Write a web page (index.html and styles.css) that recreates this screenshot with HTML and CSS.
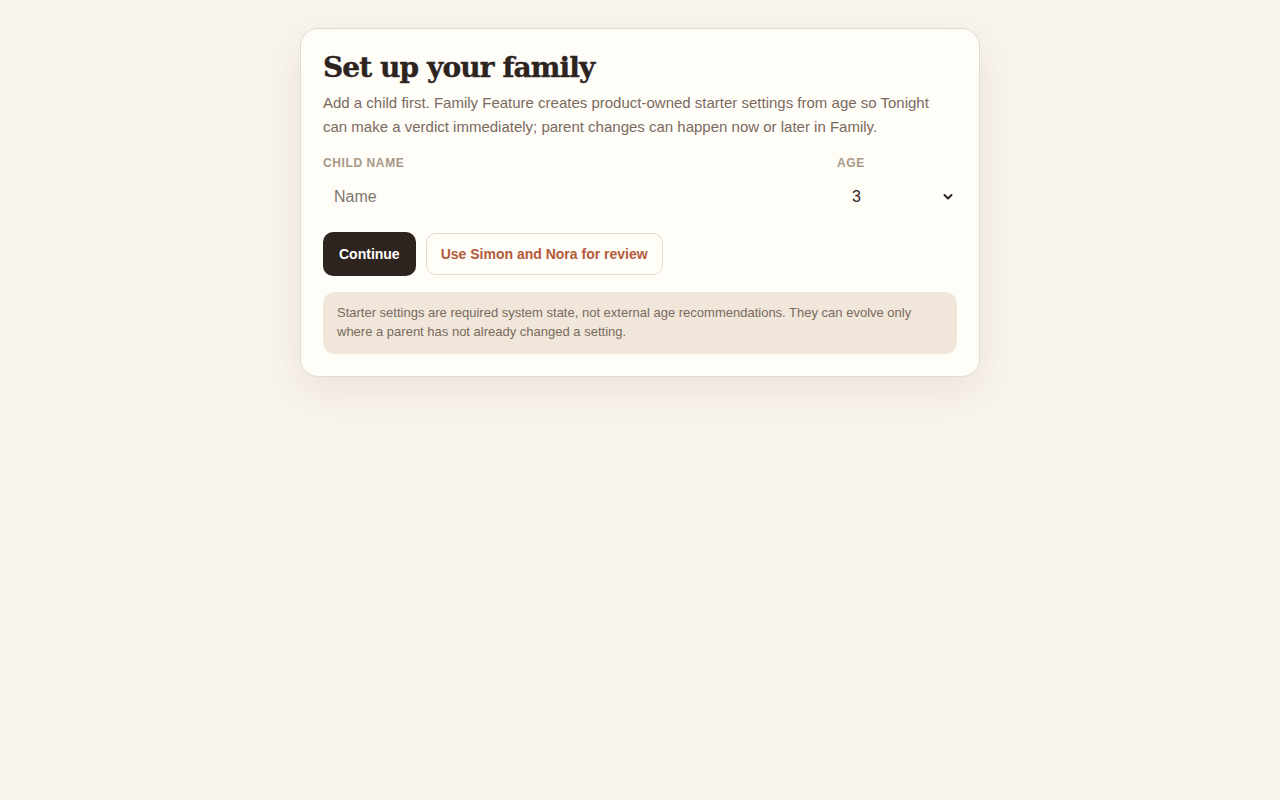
FILE: index.html
```html
<!DOCTYPE html>
<html lang="en">
<head>
<meta charset="utf-8">
<title>Set up your family</title>
<link rel="stylesheet" href="styles.css">
</head>
<body>
<main class="page">
  <section class="card">
    <h1 class="title">Set up your family</h1>
    <p class="lead">Add a child first. Family Feature creates product-owned starter settings from age so Tonight can make a verdict immediately; parent changes can happen now or later in Family.</p>
    <div class="fields">
      <label class="field">
        <span class="label">Child name</span>
        <input class="input" type="text" placeholder="Name">
      </label>
      <label class="field">
        <span class="label">Age</span>
        <span class="select-wrap">
          <span class="select-value">3</span>
          <svg class="chev" width="10" height="8" viewBox="0 0 10 8"><path d="M1.5 2 L5 5.5 L8.5 2" fill="none" stroke="#2e241f" stroke-width="2" stroke-linecap="round" stroke-linejoin="round"/></svg>
        </span>
      </label>
    </div>
    <div class="actions">
      <button class="btn btn-primary">Continue</button>
      <button class="btn btn-secondary">Use Simon and Nora for review</button>
    </div>
    <div class="note">Starter settings are required system state, not external age recommendations. They can evolve only where a parent has not already changed a setting.</div>
  </section>
</main>
</body>
</html>
```
FILE: styles.css
```css
html, body {
  margin: 0;
  padding: 0;
  background: #f9f4ee;
  font-family: "Liberation Sans", Arial, sans-serif;
}
.page {
  display: flex;
  justify-content: center;
  align-items: flex-start;
  padding: 28px 0 60px;
  min-height: 100vh;
  box-sizing: border-box;
}
.card {
  box-sizing: border-box;
  width: 680px;
  background: #fffdf8;
  border: 1px solid #e4dbd0;
  border-radius: 18px;
  padding: 20px 22px 22px;
  box-shadow: 0 14px 40px rgba(120, 80, 50, 0.10);
}
.title {
  margin: 0;
  font-family: "DejaVu Serif", "Liberation Serif", serif;
  font-weight: 700;
  font-size: 28px;
  letter-spacing: -0.9px;
  line-height: 38px;
  color: #2e241f;
  -webkit-text-stroke: 0.4px #2e241f;
}
.lead {
  margin: 4px 0 0;
  font-size: 15px;
  line-height: 24px;
  color: #7a6a5e;
}
.fields {
  display: grid;
  grid-template-columns: 1fr 120px;
  column-gap: 14px;
  margin-top: 16px;
}
.field {
  display: flex;
  flex-direction: column;
}
.label {
  font-size: 12px;
  font-weight: 700;
  letter-spacing: 0.6px;
  text-transform: uppercase;
  color: #a89886;
  line-height: 16px;
}
.input {
  box-sizing: border-box;
  height: 40px;
  margin-top: 6px;
  border: none;
  background: transparent;
  padding: 0 11px;
  font-family: "Liberation Sans", Arial, sans-serif;
  font-size: 16px;
  color: #2e241f;
  outline: none;
}
.input::placeholder {
  color: #7f7670;
}
.select-wrap {
  box-sizing: border-box;
  height: 40px;
  margin-top: 6px;
  display: flex;
  align-items: center;
  justify-content: space-between;
  padding: 0 4px 0 15px;
}
.select-value {
  font-size: 16px;
  color: #2e241f;
}
.actions {
  display: flex;
  align-items: center;
  gap: 10px;
  margin-top: 15px;
}
.btn {
  font-family: "Liberation Sans", Arial, sans-serif;
  font-size: 14px;
  font-weight: 700;
  border-radius: 10px;
  cursor: pointer;
}
.btn-primary {
  height: 44px;
  padding: 0 16px;
  background: #2e241f;
  color: #ffffff;
  border: none;
}
.btn-secondary {
  height: 42px;
  padding: 0 14px;
  background: #fffdf8;
  color: #b35a3a;
  border: 1px solid #e6d9cc;
}
.note {
  margin-top: 16px;
  background: #f0e6da;
  border-radius: 12px;
  padding: 11px 14px 13px;
  font-size: 13px;
  line-height: 19px;
  color: #7a6a5e;
}
```
